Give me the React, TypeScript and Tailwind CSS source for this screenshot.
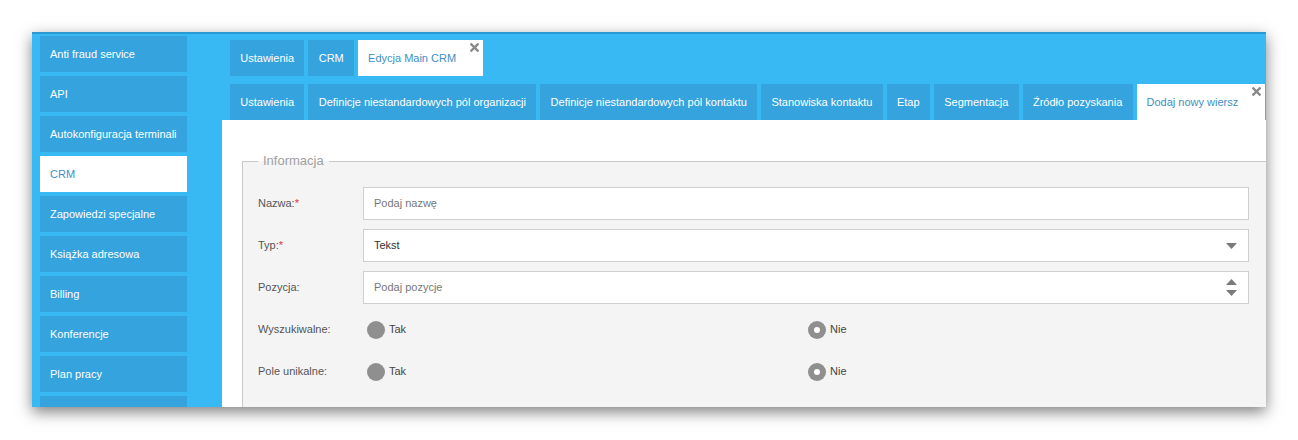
import type { ReactNode } from "react";

const sidebar = [
  "Anti fraud service",
  "API",
  "Autokonfiguracja terminali",
  "CRM",
  "Zapowiedzi specjalne",
  "Książka adresowa",
  "Billing",
  "Konferencje",
  "Plan pracy",
  "",
];

const topTabs = ["Ustawienia", "CRM"];
const subTabs = [
  "Ustawienia",
  "Definicje niestandardowych pól organizacji",
  "Definicje niestandardowych pól kontaktu",
  "Stanowiska kontaktu",
  "Etap",
  "Segmentacja",
  "Źródło pozyskania",
];

function CloseX() {
  return (
    <svg className="absolute right-[4px] top-[3px] h-[9px] w-[9px]" viewBox="0 0 10 10">
      <path d="M1.5 1.5l7 7M8.5 1.5l-7 7" stroke="#8a8a8a" strokeWidth="2.6" strokeLinecap="square" />
    </svg>
  );
}

function Tab({ label }: { label: string }) {
  return (
    <div className="flex h-9 shrink-0 items-center bg-[#35a3dd] px-[10.3px] text-[11px] text-white whitespace-nowrap">
      {label}
    </div>
  );
}

function ActiveTab({ label }: { label: string }) {
  return (
    <div className="relative flex h-9 shrink-0 items-center bg-white pl-[10px] pr-[27px] text-[11px] text-[#3e8fc4] whitespace-nowrap">
      {label}
      <CloseX />
    </div>
  );
}

function Row({ label, required, children }: { label: string; required?: boolean; children: ReactNode }) {
  return (
    <div className="flex h-[33px] items-center">
      <div className="w-[105px] shrink-0 text-[11px] text-[#555]">
        {label}
        {required && <span className="text-[#e2333a]">*</span>}
      </div>
      <div className="flex-1">{children}</div>
    </div>
  );
}

function Radio({ checked, label }: { checked?: boolean; label: string }) {
  return (
    <div className="flex items-center gap-[4px] text-[11px] text-[#444]">
      <span className="flex h-[18px] w-[18px] items-center justify-center rounded-full bg-[#8f8f8f]">
        {checked && <span className="h-[6px] w-[6px] rounded-full bg-white" />}
      </span>
      {label}
    </div>
  );
}

export default function App() {
  return (
    <div className="h-[440px] w-[1298px] bg-white pl-8 pt-8 font-['Liberation_Sans',Arial,sans-serif]">
      <div className="flex h-[375px] w-[1234px] overflow-hidden border-t-2 border-[#2a9ad3] bg-[#38b9f4] shadow-[0_5px_14px_rgba(0,0,0,0.5)]">
        {/* menu boczne */}
        <div className="flex w-[147px] shrink-0 ml-2 mt-[2px] flex-col gap-1">
          {sidebar.map((item, i) => (
            <div
              key={i}
              className={
                item === "CRM"
                  ? "flex h-9 shrink-0 items-center bg-white px-[10px] text-[11px] text-[#3e8fc4]"
                  : "flex h-9 shrink-0 items-center bg-[#35a3dd] px-[10px] text-[11px] text-white whitespace-nowrap"
              }
            >
              {item}
            </div>
          ))}
        </div>

        <div className="ml-[35px] flex min-w-0 flex-1 flex-col">
          <div className="mt-[6px] flex gap-1 pl-2">
            {topTabs.map((t) => (
              <Tab key={t} label={t} />
            ))}
            <ActiveTab label="Edycja Main CRM" />
          </div>
          <div className="mt-2 flex gap-1 pl-2">
            {subTabs.map((t) => (
              <Tab key={t} label={t} />
            ))}
            <ActiveTab label="Dodaj nowy wiersz" />
          </div>

          {/* formularz */}
          <div className="flex-1 overflow-hidden bg-white pl-5">
            <fieldset className="mr-[-12px] mt-[33px] border border-[#c8c8c8] bg-[#f4f4f4] pb-6 pl-[15px] pr-[28px]">
              <legend className="px-[5px] text-[13px] leading-[16px] text-[#a0a0a0]">Informacja</legend>
              <div className="mt-[18px] flex flex-col gap-[9px]">
                <Row label="Nazwa:" required>
                  <div className="flex h-[33px] items-center border border-[#cfcfcf] bg-white px-[10px] text-[11px] text-[#777]">
                    Podaj nazwę
                  </div>
                </Row>
                <Row label="Typ:" required>
                  <div className="flex h-[33px] items-center justify-between border border-[#cfcfcf] bg-white pl-[10px] pr-[11px] text-[11px] text-[#333]">
                    Tekst
                    <svg width="11" height="6" viewBox="0 0 11 6">
                      <path d="M0 0h11L5.5 6z" fill="#7a7a7a" />
                    </svg>
                  </div>
                </Row>
                <Row label="Pozycja:">
                  <div className="flex h-[33px] items-center justify-between border border-[#cfcfcf] bg-white pl-[10px] pr-[11px] text-[11px] text-[#777]">
                    Podaj pozycje
                    <svg width="11" height="17" viewBox="0 0 11 17">
                      <path d="M5.5 0L11 6H0z" fill="#7a7a7a" />
                      <path d="M0 11h11L5.5 17z" fill="#7a7a7a" />
                    </svg>
                  </div>
                </Row>
                <Row label="Wyszukiwalne:">
                  <div className="grid grid-cols-2 pl-[4px]">
                    <Radio label="Tak" />
                    <Radio checked label="Nie" />
                  </div>
                </Row>
                <Row label="Pole unikalne:">
                  <div className="grid grid-cols-2 pl-[4px]">
                    <Radio label="Tak" />
                    <Radio checked label="Nie" />
                  </div>
                </Row>
              </div>
            </fieldset>
          </div>
        </div>
      </div>
    </div>
  );
}
